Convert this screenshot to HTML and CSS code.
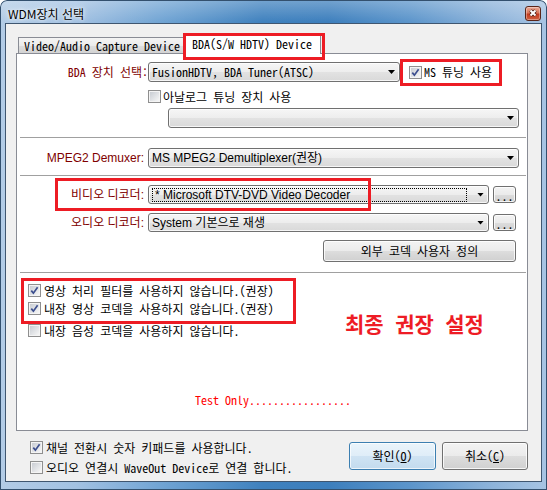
FILE: index.html
```html
<!DOCTYPE html>
<html lang="ko">
<head>
<meta charset="utf-8">
<title>WDM장치 선택</title>
<link rel="stylesheet" href="styles.css">
</head>
<body>
<div class="window">
  <div class="titlebar">
    <span class="title">WDM장치 선택</span>
    <span class="close"><svg width="14" height="13" viewBox="0 0 14 13"><path class="xo" d="M4.5 3.5l5 5M9.5 3.5l-5 5"/><path class="xi" d="M4.5 3.5l5 5M9.5 3.5l-5 5"/></svg></span>
  </div>
  <div class="client">
    <div class="tabs">
      <div class="tab">Video/Audio Capture Device</div>
      <div class="tab active">BDA(S/W HDTV) Device<span class="mark mark-tab"></span></div>
    </div>
    <div class="pane">
      <div class="row ra">
        <span class="lbl">BDA 장치 선택:</span>
        <div class="combo c-bda"><span class="val">FusionHDTV, BDA Tuner(ATSC)</span><i class="arr"></i></div>
        <div class="chk ms"><span class="cb"><svg viewBox="0 0 9 9" width="9" height="9"><path d="M1.3 4.6l2.1 2.6 4.2-6"/></svg></span><span>MS 튜닝 사용</span><span class="mark mark-ms"></span></div>
      </div>
      <div class="row rb">
        <div class="chk analog"><span class="cb off"></span><span>아날로그 튜닝 장치 사용</span></div>
      </div>
      <div class="row rc">
        <div class="combo c-analog"><span class="val"></span><i class="arr"></i></div>
      </div>
      <div class="sep s1"></div>
      <div class="row rd">
        <span class="lbl prop">MPEG2 Demuxer:</span>
        <div class="combo c-full prop"><span class="val">MS MPEG2 Demultiplexer(권장)</span><i class="arr"></i></div>
      </div>
      <div class="sep s2"></div>
      <div class="row re">
        <span class="lbl prop">비디오 디코더:</span>
        <div class="combo c-dec prop"><span class="val focus">* Microsoft DTV-DVD Video Decoder</span><i class="arr"></i></div>
        <div class="btn dots">...</div>
        <span class="mark mark-vid"></span>
      </div>
      <div class="row rf">
        <span class="lbl prop">오디오 디코더:</span>
        <div class="combo c-dec prop"><span class="val">System 기본으로 재생</span><i class="arr"></i></div>
        <div class="btn dots">...</div>
      </div>
      <div class="row rg">
        <div class="btn codec">외부 코덱 사용자 정의</div>
      </div>
      <div class="sep s3"></div>
      <div class="opts">
        <div class="opts-list">
          <div class="chk o1"><span class="cb"><svg viewBox="0 0 9 9" width="9" height="9"><path d="M1.3 4.6l2.1 2.6 4.2-6"/></svg></span><span>영상 처리 필터를 사용하지 않습니다.(권장)</span></div>
          <div class="chk o2"><span class="cb"><svg viewBox="0 0 9 9" width="9" height="9"><path d="M1.3 4.6l2.1 2.6 4.2-6"/></svg></span><span>내장 영상 코덱을 사용하지 않습니다.(권장)</span></div>
          <div class="chk o3"><span class="cb off"></span><span>내장 음성 코덱을 사용하지 않습니다.</span></div>
          <span class="mark mark-opts"></span>
        </div>
        <div class="final">최종 권장 설정</div>
      </div>
      <div class="test">Test Only.................</div>
    </div>
    <div class="bottom">
      <div class="bottom-list">
        <div class="chk b1"><span class="cb"><svg viewBox="0 0 9 9" width="9" height="9"><path d="M1.3 4.6l2.1 2.6 4.2-6"/></svg></span><span>채널 전환시 숫자 키패드를 사용합니다.</span></div>
        <div class="chk b2"><span class="cb off"></span><span>오디오 연결시 WaveOut Device로 연결 합니다.</span></div>
      </div>
      <div class="buttons">
        <div class="btn big default">확인(<u>O</u>)</div>
        <div class="btn big cancel">취소(<u>C</u>)</div>
      </div>
    </div>
  </div>
</div>
</body>
</html>
```
FILE: styles.css
```css
* { box-sizing: border-box; }
html, body { margin: 0; padding: 0; background: #fff; }
body {
  font-family: "Noto Sans Mono CJK KR", "Noto Sans CJK KR", monospace;
  font-size: 12px;
  line-height: 14px;
  color: #000;
}

.window {
  width: 547px;
  height: 490px;
  padding: 0 5px 8px;
  border-radius: 7px 7px 0 0;
  display: flex;
  flex-direction: column;
  background:
    linear-gradient(180deg, rgba(255,255,255,.28), rgba(255,255,255,0) 22px),
    linear-gradient(90deg, #b3cce6 0%, #a2c1e2 14%, #6fa3d3 30%, #3f81be 48%, #3d7fbd 60%, #5c95cb 75%, #8db3da 90%, #a7c4e3 100%);
  box-shadow: inset 0 0 0 1px #33506e;
}

.titlebar {
  height: 23px;
  display: flex;
  justify-content: space-between;
  align-items: flex-start;
  padding: 0 1px 0 3px;
}
.title {
  margin-top: 6px;
  font-family: "Noto Sans CJK KR", sans-serif;
  font-size: 12px;
  line-height: 16px;
  color: #000;
  text-shadow: 0 0 6px #fff, 0 0 3px rgba(255,255,255,.9);
}
.close {
  margin-top: 6px;
  width: 16px;
  height: 15px;
  border: 1px solid #5a2518;
  border-radius: 3px;
  background: linear-gradient(180deg, #eaa996 0%, #d97458 45%, #c33b1f 55%, #d0603f 100%);
  box-shadow: inset 0 0 0 1px rgba(255,255,255,.35);
  display: flex;
  align-items: center;
  justify-content: center;
}
.close svg { display: block; }
.close .xo { stroke: #4a1d12; stroke-width: 3.6; fill: none; }
.close .xi { stroke: #fff; stroke-width: 2; fill: none; }

.client {
  flex: 1;
  border: 1px solid #3f5670;
  background: #f0f0f0;
  padding: 9px 13px 0 10px;
  display: flex;
  flex-direction: column;
}

.tabs {
  height: 20px;
  display: flex;
  align-items: flex-end;
  padding-left: 2px;
  position: relative;
  z-index: 2;
}
.tab {
  height: 16px;
  border: 1px solid #898c95;
  border-bottom: none;
  background: linear-gradient(180deg, #f4f4f4 0%, #ebebeb 50%, #dedede 51%, #d3d3d3 100%);
  padding: 0 4px 0 5px;
  line-height: 15px;
  white-space: nowrap;
}
.tab.active {
  height: 21px;
  margin-left: -2px;
  margin-bottom: -1px;
  padding: 2px 8px 0;
  background: #fff;
  position: relative;
}

.pane {
  height: 378px;
  border: 1px solid #898c95;
  background: #fff;
  display: flex;
  flex-direction: column;
}

.mark {
  position: absolute;
  border: 3px solid #ed1c24;
  pointer-events: none;
}
.mark-tab { left: -1px; top: -1px; width: 142px; height: 27px; }
.mark-ms { left: -9px; top: -3px; width: 102px; height: 27px; }
.mark-vid { left: 38px; top: -7px; width: 316px; height: 33px; }
.mark-opts { left: 4px; top: -4px; width: 275px; height: 46px; }

.row {
  display: flex;
  align-items: center;
  position: relative;
}
.ra { margin-top: 8px; height: 20px; }
.rb { margin-top: 6px; height: 17px; }
.rc { margin-top: 3px; height: 20px; }
.rd { margin-top: 10px; height: 20px; }
.re { margin-top: 9px; height: 19px; }
.rf { margin-top: 9px; height: 19px; }
.rg { margin-top: 8px; height: 22px; }

.lbl {
  flex: none;
  width: 131px;
  text-align: right;
  color: #800000;
  white-space: nowrap;
}
.lbl.prop { padding-right: 4px; }
.prop { font-family: "Liberation Sans", "Noto Sans CJK KR", sans-serif; }

.combo {
  flex: none;
  height: 100%;
  border: 1px solid #707070;
  border-radius: 3px;
  background: linear-gradient(180deg, #f6f6f6 0%, #ededed 50%, #e2e2e2 52%, #d9d9d9 100%);
  box-shadow: inset 0 0 0 1px rgba(255,255,255,.75);
  display: flex;
  align-items: center;
  justify-content: space-between;
  padding: 0 4px 0 3px;
  white-space: nowrap;
}
.c-bda { width: 252px; }
.c-analog { width: 351px; margin-left: 151px; }
.c-full { width: 371px; }
.c-dec { width: 341px; }
.val { line-height: 14px; }
.val.focus {
  flex: 1;
  margin-right: 10px;
  border: 1px dotted #000;
  padding: 0 2px;
  line-height: 12px;
}
.arr {
  flex: none;
  width: 7px;
  height: 4px;
  background: #000;
  clip-path: polygon(0 0, 100% 0, 50% 100%);
}

.chk {
  display: flex;
  align-items: center;
  gap: 2px;
  white-space: nowrap;
  position: relative;
}
.ms { margin-left: 9px; height: 20px; }
.analog { margin-left: 131px; }

.cb {
  flex: none;
  width: 13px;
  height: 13px;
  border: 1px solid #8f8f8f;
  padding: 1px;
  background: linear-gradient(135deg, #c9cdd3, #f6f6f6) content-box, #f4f4f4;
  display: flex;
  align-items: center;
  justify-content: center;
}
.cb svg { display: block; fill: none; stroke: #3c4e8e; stroke-width: 1.7; }

.sep {
  height: 1px;
  background: #a0a0a0;
  margin: 0 1px 0 3px;
}
.s1 { margin-top: 9px; }
.s2 { margin-top: 7px; }
.s3 { margin-top: 10px; }

.btn {
  flex: none;
  border: 1px solid #707070;
  border-radius: 3px;
  background: linear-gradient(180deg, #f3f3f3 0%, #ebebeb 50%, #dddddd 51%, #d0d0d0 100%);
  box-shadow: inset 0 0 0 1px rgba(255,255,255,.8);
  display: flex;
  align-items: center;
  justify-content: center;
  white-space: nowrap;
}
.dots {
  width: 23px;
  height: 17px;
  margin-left: 4px;
  align-items: flex-end;
  line-height: 12px;
}
.codec { width: 193px; height: 22px; margin-left: 306px; }

.opts { display: flex; margin-top: 9px; }
.opts-list {
  width: 328px;
  padding-left: 11px;
  position: relative;
  display: flex;
  flex-direction: column;
}
.opts-list .chk { height: 17px; gap: 3px; }
.o2 { margin-top: 1px; }
.o3 { margin-top: 5px; }
.final {
  margin-top: 30px;
  font-size: 21px;
  line-height: 23px;
  font-weight: bold;
  word-spacing: 1px;
  color: #ee1c25;
  white-space: nowrap;
  align-self: flex-start;
}

.test {
  margin-top: 54px;
  padding-left: 178px;
  color: #ff0000;
  line-height: 14px;
}

.bottom {
  display: flex;
  justify-content: space-between;
  padding-left: 14px;
}
.bottom-list { margin-top: 8px; display: flex; flex-direction: column; }
.bottom-list .chk { height: 17px; gap: 3px; }
.b2 { margin-top: 3px; }
.buttons { display: flex; gap: 6px; margin-top: 11px; }
.big { height: 28px; }
.default {
  width: 87px;
  border-color: #3c7fb1;
  background: linear-gradient(180deg, #eaf4fb 0%, #dfedf8 50%, #cfe3f3 51%, #c3dbee 100%);
  box-shadow: inset 0 0 0 1px rgba(255,255,255,.7);
}
.cancel { width: 86px; }
u { text-decoration: underline; text-underline-offset: 1px; }
```
